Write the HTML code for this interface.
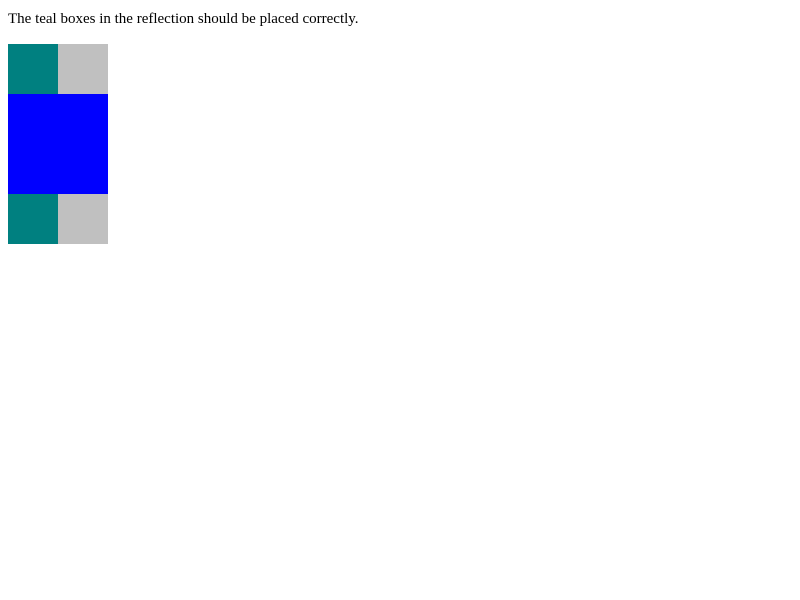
<!DOCTYPE html>
<html><head><style>
body{margin:0;font-family:"Liberation Serif",serif;font-size:15px;background:#fff}
p{position:absolute;left:8px;top:11px;margin:0;line-height:17px;white-space:nowrap}
.wrap{position:absolute;left:8px;top:44px}
.row{display:flex;width:100px;height:50px}
.t{width:50px;background:#008080}.s{width:50px;background:#c0c0c0}
.b{width:100px;height:100px;background:#00f}
</style></head><body>
<p>The teal boxes in the reflection should be placed correctly.</p>
<div class="wrap">
<div class="row"><div class="t"></div><div class="s"></div></div>
<div class="b"></div>
<div class="row"><div class="t"></div><div class="s"></div></div>
</div>
</body></html>
